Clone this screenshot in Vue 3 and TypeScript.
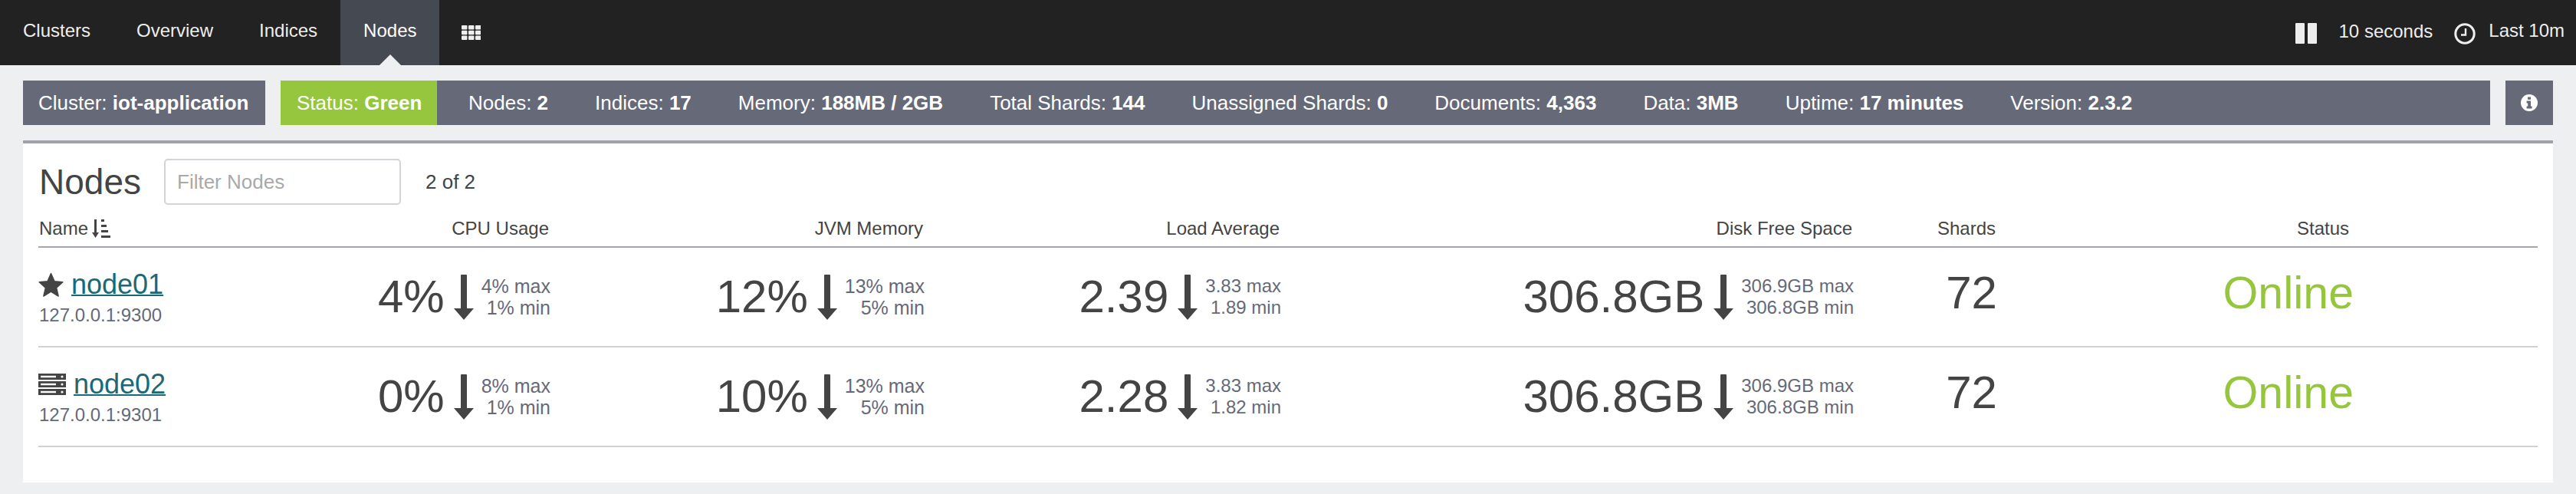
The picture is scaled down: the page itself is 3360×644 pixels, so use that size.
<script setup lang="ts">
interface Metric {
  value: string
  max: string
  min: string
}

interface EsNode {
  name: string
  address: string
  master: boolean
  cpu: Metric
  jvm: Metric
  load: Metric
  disk: Metric
  shards: number
  status: string
}

const tabs = ['Clusters', 'Overview', 'Indices', 'Nodes']

const stats = [
  { label: 'Nodes:', value: '2' },
  { label: 'Indices:', value: '17' },
  { label: 'Memory:', value: '188MB / 2GB' },
  { label: 'Total Shards:', value: '144' },
  { label: 'Unassigned Shards:', value: '0' },
  { label: 'Documents:', value: '4,363' },
  { label: 'Data:', value: '3MB' },
  { label: 'Uptime:', value: '17 minutes' },
  { label: 'Version:', value: '2.3.2' }
]

const headers = ['CPU Usage', 'JVM Memory', 'Load Average', 'Disk Free Space', 'Shards', 'Status']

const nodes: EsNode[] = [
  {
    name: 'node01',
    address: '127.0.0.1:9300',
    master: true,
    cpu: { value: '4%', max: '4% max', min: '1% min' },
    jvm: { value: '12%', max: '13% max', min: '5% min' },
    load: { value: '2.39', max: '3.83 max', min: '1.89 min' },
    disk: { value: '306.8GB', max: '306.9GB max', min: '306.8GB min' },
    shards: 72,
    status: 'Online'
  },
  {
    name: 'node02',
    address: '127.0.0.1:9301',
    master: false,
    cpu: { value: '0%', max: '8% max', min: '1% min' },
    jvm: { value: '10%', max: '13% max', min: '5% min' },
    load: { value: '2.28', max: '3.83 max', min: '1.82 min' },
    disk: { value: '306.8GB', max: '306.9GB max', min: '306.8GB min' },
    shards: 72,
    status: 'Online'
  }
]

// the four metric columns, in table order
const metricsOf = (n: EsNode): Metric[] => [n.cpu, n.jvm, n.load, n.disk]
</script>

<template>
  <div class="page">
    <nav class="navbar">
      <a
        v-for="tab in tabs"
        :key="tab"
        class="tab"
        :class="{ active: tab === 'Nodes' }"
      >{{ tab }}</a>
      <a class="tab grid-tab">
        <svg width="25" height="19" viewBox="0 0 25 19">
          <g fill="#eeeeee">
            <rect v-for="r in 9" :key="r" :x="((r - 1) % 3) * 9" :y="Math.floor((r - 1) / 3) * 6.8" width="7.5" height="5.4" rx="1" />
          </g>
        </svg>
      </a>
      <div class="nav-right">
        <svg class="pause" width="28" height="27" viewBox="0 0 28 27">
          <rect x="0" y="0" width="12" height="27" rx="1" fill="#eeeeee" />
          <rect x="16" y="0" width="12" height="27" rx="1" fill="#eeeeee" />
        </svg>
        <span class="interval">10 seconds</span>
        <svg class="clock" width="28" height="28" viewBox="0 0 28 28">
          <circle cx="14" cy="14" r="12.2" fill="none" stroke="#eeeeee" stroke-width="3" />
          <path d="M15 7v8.500H9" fill="none" stroke="#eeeeee" stroke-width="2.400" />
        </svg>
        <span class="range">Last 10m</span>
      </div>
    </nav>

    <div class="summary">
      <div class="cluster-name">Cluster: <b>iot-application</b></div>
      <div class="stat-bar">
        <div class="status-pill">Status: <b>Green</b></div>
        <div class="stats">
          <span v-for="s in stats" :key="s.label">{{ s.label }} <b>{{ s.value }}</b></span>
        </div>
      </div>
      <div class="info-btn">
        <svg width="22" height="22" viewBox="0 0 22 22">
          <circle cx="11" cy="11" r="11" fill="#ffffff" />
          <path d="M9 3.600h4v3.200H9zM7.600 8.600H13v7h1.600v2.800H7.600v-2.800h1.600v-4.200H7.600z" fill="#666978" />
        </svg>
      </div>
    </div>

    <section class="panel">
      <div class="title-row">
        <h1>Nodes</h1>
        <input class="filter" type="text" placeholder="Filter Nodes" />
        <span class="count">2 of 2</span>
      </div>

      <div class="grid-row head-row">
        <div class="name-head">
          Name
          <svg width="24" height="24" viewBox="0 0 24 24">
            <g fill="#444444">
              <path d="M3 0h3v17h3l-4.500 7L0 17h3z" />
              <rect x="12" y="0" width="4" height="3" />
              <rect x="12" y="7" width="7" height="3" />
              <rect x="12" y="14" width="9" height="3" />
              <rect x="12" y="21" width="12" height="3" />
            </g>
          </svg>
        </div>
        <div v-for="h in headers" :key="h" class="head-cell" :class="{ 'status-head': h === 'Status' }">{{ h }}</div>
      </div>

      <div v-for="n in nodes" :key="n.name" class="grid-row node-row">
        <div class="name-cell">
          <div class="name-line">
            <svg v-if="n.master" width="33" height="32" viewBox="0 0 33 32">
              <path d="M16.500 1.500l4.500 10.300 10.800 1-8.200 7.300 2.500 10.900-9.600-5.800-9.600 5.800 2.500-10.900-8.200-7.300 10.800-1z" fill="#444444" stroke="#444444" stroke-width="1.500" stroke-linejoin="round" />
            </svg>
            <svg v-else width="36" height="28" viewBox="0 0 36 28">
              <g v-for="i in 3" :key="i">
                <rect x="0" :y="(i - 1) * 10" width="36" height="8" fill="#444444" />
                <rect x="3" :y="(i - 1) * 10 + 2.800" width="20" height="2.400" fill="#ffffff" />
                <circle cx="31" :cy="(i - 1) * 10 + 4" r="1.600" fill="#ffffff" />
              </g>
            </svg>
            <a class="node-link">{{ n.name }}</a>
          </div>
          <div class="address">{{ n.address }}</div>
        </div>

        <div v-for="(m, idx) in metricsOf(n)" :key="idx" class="metric" :class="{ pct: idx < 2 }">
          <span class="big">{{ m.value }}</span>
          <svg class="arrow" width="26" height="59" viewBox="0 0 26 59">
            <path d="M10 0h6a1 1 0 0 1 1 1v43h9L13 59 0 44h9V1a1 1 0 0 1 1-1z" fill="#444444" />
          </svg>
          <div class="minmax">
            <div>{{ m.max }}</div>
            <div>{{ m.min }}</div>
          </div>
        </div>

        <div class="shards">{{ n.shards }}</div>
        <div class="online">{{ n.status }}</div>
      </div>
    </section>
  </div>
</template>

<style scoped>
.page {
  font-family: "Liberation Sans", Arial, sans-serif;
  color: #444444;
  padding-bottom: 15px;
}
.navbar {
  display: flex;
  height: 85px;
  background: #222222;
  color: #eeeeee;
  font-size: 24px;
  line-height: 28px;
}
.tab {
  position: relative;
  padding: 26px 30px 31px;
}
.tab.active {
  background: #444952;
  color: #ffffff;
}
.tab.active::after {
  content: '';
  position: absolute;
  left: 50%;
  bottom: 0;
  margin-left: -14px;
  border-left: 14px solid transparent;
  border-right: 14px solid transparent;
  border-bottom: 14px solid #eeeff1;
}
.grid-tab {
  padding: 30px 0 0 29px;
}
.nav-right {
  margin-left: auto;
  display: flex;
  align-items: flex-start;
  padding: 30px 15px 0 0;
}
.interval {
  margin: -3px 0 0 29px;
}
.clock {
  margin-left: 28px;
}
.range {
  margin: -4px 0 0 17px;
}
.summary {
  display: flex;
  margin: 20px 30px;
  height: 58px;
  color: #ffffff;
  font-size: 26px;
  line-height: 58px;
  white-space: nowrap;
}
.cluster-name {
  background: #666978;
  padding: 0 20px;
  width: 316px;
  box-sizing: border-box;
}
.stat-bar {
  flex: 1;
  display: flex;
  margin: 0 20px;
  background: #666978;
}
.status-pill {
  width: 204px;
  padding-left: 21px;
  box-sizing: border-box;
  background: #95c63d;
}
.stats {
  display: flex;
  gap: 61px;
  padding-left: 41px;
}
.info-btn {
  width: 62px;
  background: #666978;
  display: flex;
  align-items: center;
  justify-content: center;
}
.panel {
  margin: 0 30px;
  height: 446px;
  box-sizing: border-box;
  padding: 20px 20px 0;
  background: #ffffff;
  border-top: 4px solid #a0a1aa;
}
.title-row {
  display: flex;
  align-items: center;
  height: 60px;
}
h1 {
  margin: 0;
  font-size: 46px;
  font-weight: 400;
  line-height: 60px;
  width: 164px;
  color: #444444;
  padding-left: 1px;
  box-sizing: border-box;
}
.filter {
  width: 309px;
  height: 60px;
  box-sizing: border-box;
  padding: 0 15px;
  border: 2px solid #d3d4d9;
  border-radius: 5px;
  outline: none;
  font-family: inherit;
  font-size: 26px;
  background: #ffffff;
}
.filter::placeholder {
  color: #a9a9a9;
  opacity: 1;
}
.count {
  margin-left: 32px;
  font-size: 26px;
}
.grid-row {
  display: grid;
  grid-template-columns: 300px 368px 488px 465px 747px 187px 1fr;
  align-items: center;
}
.head-row {
  padding: 17px 0 9px;
  font-size: 24px;
  line-height: 28px;
  border-bottom: 2px solid #a2a5a9;
}
.name-head {
  display: flex;
  align-items: center;
  gap: 5px;
  padding-left: 1px;
}
.head-cell {
  text-align: right;
  padding-right: 2px;
}
.head-cell.status-head {
  padding-right: 246px;
}
.node-row {
  height: 130px;
  box-sizing: border-box;
  border-bottom: 2px solid #d0d1d6;
}
.name-cell {
  align-self: start;
  padding-top: 28px;
}
.name-line {
  display: flex;
  align-items: center;
  gap: 10px;
  height: 40px;
}
.node-link {
  color: #196a76;
  font-size: 36px;
  line-height: 40px;
  text-decoration: underline;
  text-decoration-thickness: 2px;
}
.address {
  margin-top: 6px;
  padding-left: 1px;
  font-size: 24px;
  line-height: 28px;
  color: #666978;
}
.metric {
  display: flex;
  justify-content: flex-end;
  align-items: center;
}
.big {
  font-size: 60px;
  line-height: 66px;
}
.arrow {
  margin: 0 10px 0 12px;
}
.minmax {
  font-size: 24px;
  line-height: 28px;
  text-align: right;
  color: #666978;
  white-space: nowrap;
}
.pct .minmax {
  font-size: 25px;
}
.shards {
  font-size: 60px;
  line-height: 66px;
  text-align: right;
  padding-bottom: 10px;
}
.online {
  font-size: 59px;
  line-height: 66px;
  text-align: right;
  padding: 0 240px 10px 0;
  color: #95c63d;
}
</style>

<style>
html,
body {
  margin: 0;
  background: #eeeff1;
}
</style>
